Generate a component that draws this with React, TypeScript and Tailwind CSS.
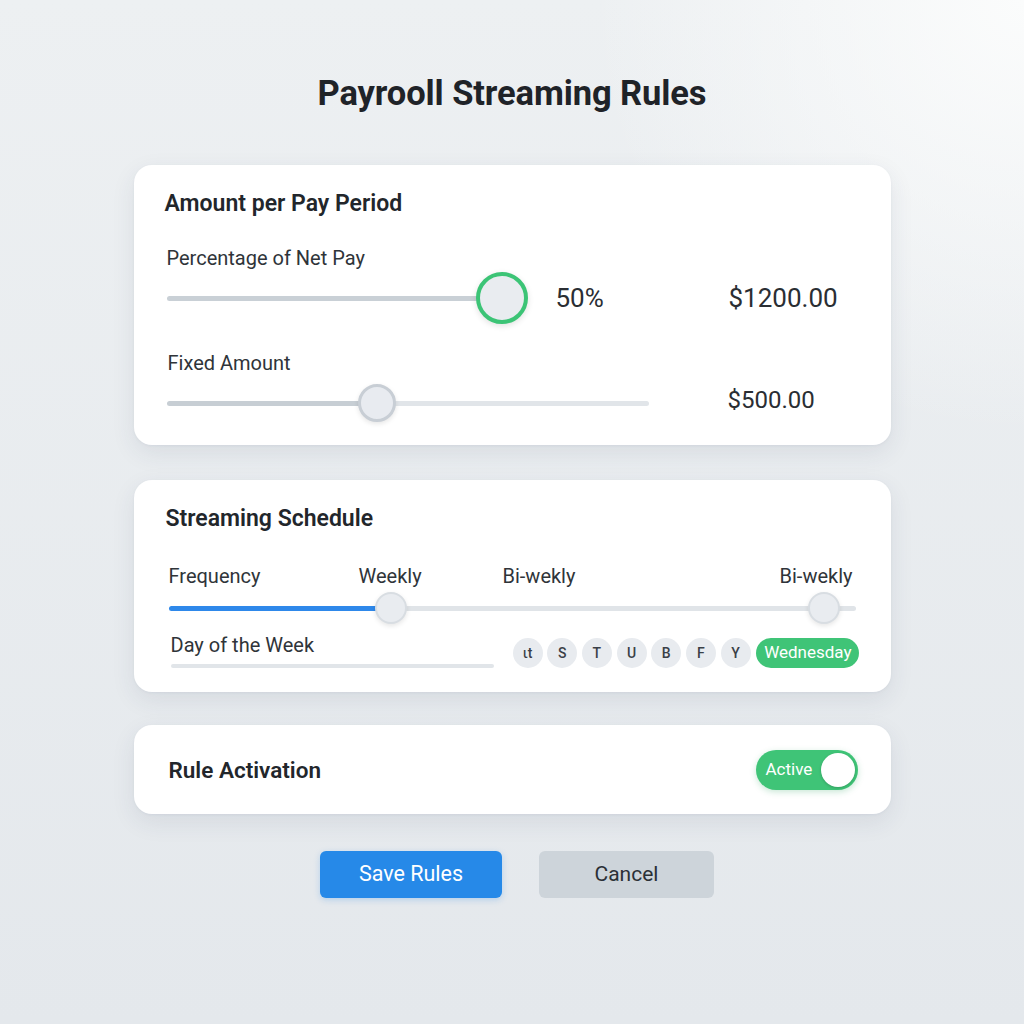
import React from "react";

const font = { fontFamily: "Roboto, 'Noto Sans', Arial, sans-serif" };

function Card({ className = "", children }: { className?: string; children: React.ReactNode }) {
  return (
    <div
      className={`mx-auto w-[757px] rounded-[18px] bg-white shadow-[0_8px_24px_rgba(40,60,90,0.09),0_1px_3px_rgba(40,60,90,0.05)] ${className}`}
    >
      {children}
    </div>
  );
}

const days = ["ɩt", "S", "T", "U", "B", "F", "Y"];

export default function App() {
  return (
    <div
      style={font}
      className="min-h-[1024px] w-full bg-[radial-gradient(circle_at_100%_0%,#fbfcfc_0%,rgba(251,252,252,0)_30%),linear-gradient(to_bottom,#edf0f2,#e4e8ec)] text-[#23272c]"
    >
      <div className="pt-[73px]">
        <h1 className="text-center text-[34.5px] font-bold leading-[40px] tracking-[-0.1px] text-[#1f2328]">
          Payrooll Streaming Rules
        </h1>
      </div>

      {/* Card 1 */}
      <Card className="mt-[52px] h-[280px] pl-[31px] pt-[25px]">
        <h2 className="text-[23px] font-semibold leading-[28px] text-[#22262b]">Amount per Pay Period</h2>
        <div className="mt-[28px] pl-[2px] text-[20px] leading-[24px] text-[#2f3439]">Percentage of Net Pay</div>
        <div className="mt-[2px] flex items-center pl-[2px]">
          <div className="relative flex h-[52px] w-[361px] items-center">
            <div className="h-[5px] w-[330px] rounded-full bg-[#c9d0d6]" />
            <div className="absolute right-0 top-0 h-[52px] w-[52px] rounded-full border-[4px] border-[#3cc476] bg-[#e9ecf0] shadow-[0_2px_6px_rgba(0,0,0,0.12)]" />
          </div>
          <div className="ml-[28px] w-[173px] text-[26px] leading-[28px] text-[#2a2e33]">50%</div>
          <div className="text-[26px] leading-[28px] text-[#2a2e33]">$1200.00</div>
        </div>
        <div className="mt-[27px] pl-[3px] text-[20px] leading-[24px] text-[#2f3439]">Fixed Amount</div>
        <div className="mt-[9px] flex items-center pl-[2px]">
          <div className="relative flex h-[38px] w-[482px] items-center">
            <div className="h-[5px] w-[200px] rounded-l-full bg-[#c7ced4]" />
            <div className="h-[5px] flex-1 rounded-r-full bg-[#e1e5e9]" />
            <div className="absolute left-[191px] top-0 h-[38px] w-[38px] rounded-full border-[3px] border-[#c8ced5] bg-[#e8ebf0] shadow-[0_2px_5px_rgba(0,0,0,0.1)]" />
          </div>
          <div className="ml-[79px] -mt-[6px] text-[24px] leading-[28px] text-[#2a2e33]">$500.00</div>
        </div>
      </Card>

      {/* Card 2 */}
      <Card className="mt-[35px] h-[212px] pl-[35px] pr-[35px] pt-[25px]">
        <h2 className="-ml-[3px] text-[23px] font-semibold leading-[28px] text-[#22262b]">Streaming Schedule</h2>
        <div className="mt-[31px] flex text-[20px] leading-[24px] text-[#2f3439]">
          <div className="w-[190px]">Frequency</div>
          <div className="w-[144px]">Weekly</div>
          <div className="flex-1">Bi-wekly</div>
          <div className="pr-[3px]">Bi-wekly</div>
        </div>
        <div className="relative mt-[4px] flex h-[32px] items-center">
          <div className="h-[5px] w-[222px] rounded-l-full bg-[#2e88ea]" />
          <div className="h-[5px] flex-1 rounded-r-full bg-[#e0e4e8]" />
          <div className="absolute left-[206px] top-0 h-[32px] w-[32px] rounded-full border-[2px] border-[#d8dde2] bg-[#e9ecf0] shadow-[0_2px_5px_rgba(0,0,0,0.1)]" />
          <div className="absolute left-[639px] top-0 h-[32px] w-[32px] rounded-full border-[2px] border-[#d8dde2] bg-[#e9ecf0] shadow-[0_2px_5px_rgba(0,0,0,0.1)]" />
        </div>
        <div className="mt-[9px] flex items-start">
          <div className="w-[325px] pl-[2px]">
            <div className="text-[20px] leading-[24px] text-[#2f3439]">Day of the Week</div>
            <div className="mt-[7px] h-[4px] w-[323px] rounded-full bg-[#e1e5e9]" />
          </div>
          <div className="ml-[19px] mt-[5px] flex items-center gap-[4.7px]">
            {days.map((d) => (
              <div
                key={d}
                className="flex h-[30px] w-[30px] items-center justify-center rounded-full bg-[#e8ebef] text-[14px] font-medium text-[#3a4047]"
              >
                {d}
              </div>
            ))}
            <div className="ml-[1px] flex h-[30px] w-[103px] items-center justify-center rounded-full bg-[#3fc477] text-[17px] text-white">
              Wednesday
            </div>
          </div>
        </div>
      </Card>

      {/* Card 3 */}
      <Card className="mt-[33px] flex h-[89px] items-center justify-between pl-[35px] pr-[33px]">
        <div className="text-[22.5px] font-semibold leading-[28px] text-[#22262b]">Rule Activation</div>
        <div className="flex h-[40px] w-[102px] items-center justify-between rounded-full bg-[#3fc477] pl-[10px] pr-[3px] shadow-[0_2px_6px_rgba(40,160,90,0.25)]">
          <span className="text-[17px] text-white">Active</span>
          <div className="h-[34px] w-[34px] rounded-full bg-white shadow-[0_1px_3px_rgba(0,0,0,0.2)]" />
        </div>
      </Card>

      {/* Buttons */}
      <div className="mt-[37px] flex justify-center gap-[37px] pl-[10px]">
        <button className="h-[47px] w-[182px] rounded-[6px] bg-[#2689e8] text-[21.5px] text-white shadow-[0_2px_6px_rgba(38,137,232,0.25)]">
          Save Rules
        </button>
        <button className="h-[47px] w-[175px] rounded-[6px] bg-[#cdd4da] text-[21px] text-[#2b3036]">
          Cancel
        </button>
      </div>
    </div>
  );
}
